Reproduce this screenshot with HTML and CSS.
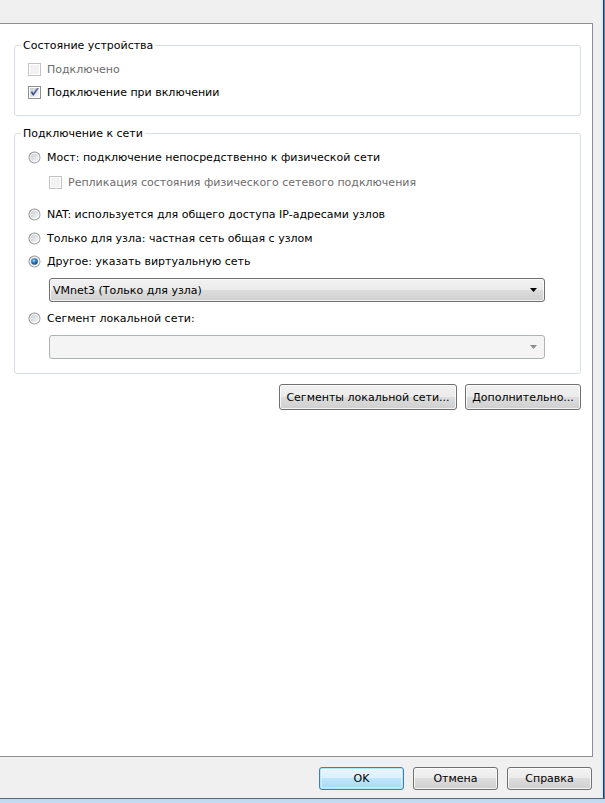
FILE: index.html
```html
<!DOCTYPE html>
<html lang="ru">
<head>
<meta charset="utf-8">
<title>Сетевой адаптер</title>
<link rel="stylesheet" href="styles.css">
</head>
<body>
<svg class="defs" width="0" height="0" aria-hidden="true">
  <defs>
    <linearGradient id="inGrad" x1="0" y1="0" x2="1" y2="1">
      <stop offset="0" stop-color="#c9ccd1"/>
      <stop offset="1" stop-color="#f7f7f7"/>
    </linearGradient>
    <linearGradient id="ringGrad" x1="0" y1="0" x2="1" y2="1">
      <stop offset="0" stop-color="#7b7d80"/>
      <stop offset="1" stop-color="#a9abad"/>
    </linearGradient>
    <radialGradient id="dotGrad" cx="0.4" cy="0.35" r="0.7">
      <stop offset="0" stop-color="#b9e0fb"/>
      <stop offset="0.35" stop-color="#3d8fd3"/>
      <stop offset="1" stop-color="#0c3a6b"/>
    </radialGradient>
    <linearGradient id="checkGrad" x1="0" y1="0" x2="0" y2="1">
      <stop offset="0" stop-color="#5a6fb0"/>
      <stop offset="1" stop-color="#2c3f7d"/>
    </linearGradient>
  </defs>
</svg>
<div class="window">
  <div class="body-row">
    <div class="content">
      <div class="topbar"></div>
      <div class="panel">
        <fieldset class="group g1">
          <legend>Состояние устройства</legend>
          <div class="row first disabled">
            <svg class="ctl" width="13" height="13" viewBox="0 0 13 13"><rect x="0.5" y="0.5" width="12" height="12" fill="#fff" stroke="#c3c3c3"/><rect x="2" y="2" width="9" height="9" fill="#f2f2f2"/></svg>
            <span>Подключено</span>
          </div>
          <div class="row">
            <svg class="ctl" width="13" height="13" viewBox="0 0 13 13"><rect x="0.5" y="0.5" width="12" height="12" fill="#fff" stroke="#8e8f8f"/><rect x="2" y="2" width="9" height="9" fill="url(#inGrad)"/><path d="M3 6.5 L5.3 9.6 L10.2 2.4 L9.1 2.4 L5.3 7.6 L4.1 5.6 Z" fill="url(#checkGrad)" stroke="#2c3f7d" stroke-width="0.5" stroke-linejoin="round"/></svg>
            <span>Подключение при включении</span>
          </div>
        </fieldset>

        <fieldset class="group g2">
          <legend>Подключение к сети</legend>
          <div class="row first">
            <svg class="ctl" width="13" height="13" viewBox="0 0 13 13"><circle cx="6.5" cy="6.5" r="6" fill="url(#ringGrad)"/><circle cx="6.5" cy="6.5" r="5" fill="#fff"/><circle cx="6.5" cy="6.5" r="4" fill="url(#inGrad)"/></svg>
            <span>Мост: подключение непосредственно к физической сети</span>
          </div>
          <div class="row rep disabled">
            <svg class="ctl" width="13" height="13" viewBox="0 0 13 13"><rect x="0.5" y="0.5" width="12" height="12" fill="#fff" stroke="#c3c3c3"/><rect x="2" y="2" width="9" height="9" fill="#f2f2f2"/></svg>
            <span>Репликация состояния физического сетевого подключения</span>
          </div>
          <div class="row nat">
            <svg class="ctl" width="13" height="13" viewBox="0 0 13 13"><circle cx="6.5" cy="6.5" r="6" fill="url(#ringGrad)"/><circle cx="6.5" cy="6.5" r="5" fill="#fff"/><circle cx="6.5" cy="6.5" r="4" fill="url(#inGrad)"/></svg>
            <span>NAT: используется для общего доступа IP-адресами узлов</span>
          </div>
          <div class="row host">
            <svg class="ctl" width="13" height="13" viewBox="0 0 13 13"><circle cx="6.5" cy="6.5" r="6" fill="url(#ringGrad)"/><circle cx="6.5" cy="6.5" r="5" fill="#fff"/><circle cx="6.5" cy="6.5" r="4" fill="url(#inGrad)"/></svg>
            <span>Только для узла: частная сеть общая с узлом</span>
          </div>
          <div class="row other">
            <svg class="ctl" width="13" height="13" viewBox="0 0 13 13"><circle cx="6.5" cy="6.5" r="6" fill="url(#ringGrad)"/><circle cx="6.5" cy="6.5" r="5" fill="#fff"/><circle cx="6.5" cy="6.5" r="4" fill="url(#inGrad)"/><circle cx="6.5" cy="6.5" r="3.3" fill="url(#dotGrad)"/></svg>
            <span>Другое: указать виртуальную сеть</span>
          </div>
          <div class="combo">
            <span>VMnet3 (Только для узла)</span>
            <svg class="arrow" width="7" height="4" viewBox="0 0 7 4"><path d="M0 0 H7 L3.5 4 Z" fill="#000"/></svg>
          </div>
          <div class="row seg">
            <svg class="ctl" width="13" height="13" viewBox="0 0 13 13"><circle cx="6.5" cy="6.5" r="6" fill="url(#ringGrad)"/><circle cx="6.5" cy="6.5" r="5" fill="#fff"/><circle cx="6.5" cy="6.5" r="4" fill="url(#inGrad)"/></svg>
            <span>Сегмент локальной сети:</span>
          </div>
          <div class="combo disabled-combo">
            <span></span>
            <svg class="arrow" width="7" height="4" viewBox="0 0 7 4"><path d="M0 0 H7 L3.5 4 Z" fill="#8d8d8d"/></svg>
          </div>
        </fieldset>

        <div class="btnrow">
          <button class="btn w178">Сегменты локальной сети...</button>
          <button class="btn w116">Дополнительно...</button>
        </div>
      </div>
      <div class="footer">
        <button class="btn fbtn default">OK</button>
        <button class="btn fbtn">Отмена</button>
        <button class="btn fbtn">Справка</button>
      </div>
    </div>
    <div class="rframe"></div>
  </div>
  <div class="bframe"></div>
</div>
</body>
</html>
```

FILE: styles.css
```css
* { box-sizing: border-box; }
html, body { margin: 0; padding: 0; }
body {
  background: #f0f0f0;
  font-family: "DejaVu Sans", "Noto Sans", sans-serif;
  font-size: 11px;
  color: #000;
  overflow: hidden;
}
.defs { position: absolute; width: 0; height: 0; }
.window {
  width: 605px;
  height: 803px;
  display: flex;
  flex-direction: column;
}
.body-row {
  display: flex;
  height: 798px;
}
.content {
  width: 601px;
  display: flex;
  flex-direction: column;
  background: #f0f0f0;
}
.topbar { height: 23px; }
.panel {
  width: 593px;
  height: 734px;
  background: #fff;
  border-top: 1px solid #8c8d91;
  border-right: 1px solid #8c8d91;
  border-bottom: 1px solid #8c8d91;
  padding-left: 14px;
}
.group {
  width: 567px;
  margin: 0;
  padding: 0 0 0 13px;
  border: 1px solid #d5dfe5;
  border-radius: 3px;
  min-inline-size: 0;
}
.group legend {
  padding: 0 2px;
  margin-left: -7px;
  line-height: 13px;
  height: 13px;
  color: #000;
}
.g1 { margin-top: 15px; padding-bottom: 11px; }
.g2 { margin-top: 11px; padding-bottom: 14px; }
.row {
  display: flex;
  align-items: center;
  height: 22px;
  gap: 6px;
  white-space: nowrap;
}
.g1 .row { height: 23px; }
.row.first { margin-top: 6px; }
.row.disabled { color: #6d6d6d; }
.ctl { flex: none; display: block; }
.rep { margin-top: 3px; padding-left: 21px; }
.nat { margin-top: 10px; }
.host { margin-top: 2px; }
.other { margin-top: 1px; }
.seg { margin-top: 5px; }
.combo {
  margin-top: 6px;
  margin-left: 21px;
  width: 496px;
  height: 24px;
  border: 1px solid #707070;
  border-radius: 3px;
  background: linear-gradient(#f2f2f2 0%, #ebebeb 50%, #dddddd 50%, #cfcfcf 100%);
  box-shadow: inset 0 0 0 1px rgba(255,255,255,0.7);
  display: flex;
  align-items: center;
  justify-content: space-between;
  padding: 0 7px 0 3px;
}
.combo.disabled-combo {
  border-color: #adb2b5;
  background: #f4f4f4;
  box-shadow: none;
}
.arrow { display: block; flex: none; }
.btnrow {
  width: 567px;
  margin-top: 10px;
  display: flex;
  justify-content: flex-end;
  gap: 8px;
}
.btn {
  font-family: inherit;
  font-size: 11px;
  color: #000;
  height: 26px;
  padding: 0;
  border: 1px solid #707070;
  border-radius: 3px;
  background: linear-gradient(#f2f2f2 0%, #ebebeb 50%, #dddddd 50%, #cfcfcf 100%);
  box-shadow: inset 0 0 0 1px rgba(255,255,255,0.75);
  text-align: center;
}
.w178 { width: 178px; }
.w116 { width: 116px; }
.footer {
  height: 41px;
  display: flex;
  justify-content: flex-end;
  align-items: flex-start;
  gap: 9px;
  padding: 10px 9px 0 0;
}
.fbtn { width: 85px; height: 23px; }
.fbtn.default {
  border-color: #3c7fb1;
  box-shadow: inset 0 0 0 1px #b2e5fb, inset 0 0 0 2px rgba(255,255,255,0.4);
  background: linear-gradient(#eaf6fd 0%, #d9f0fc 50%, #bee6fd 50%, #a7d9f5 100%);
}
.rframe {
  width: 4px;
  background: linear-gradient(to right, #dfe9f3 0, #dfe9f3 2px, #263a52 2px, #263a52 3px, #5f86b0 3px);
}
.bframe {
  height: 5px;
  background: linear-gradient(#56687c 0, #56687c 1px, #bcd6ef 1px, #c7def3 100%);
}
```
